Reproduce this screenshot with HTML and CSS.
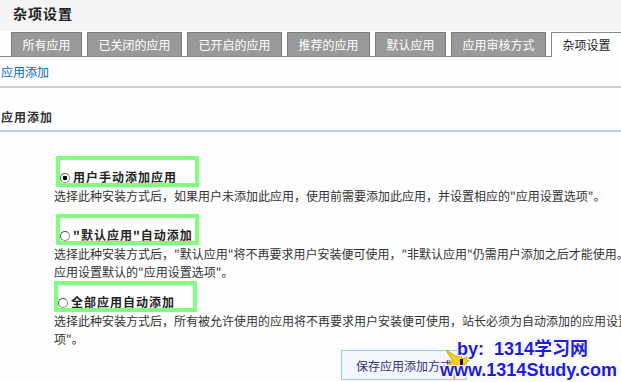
FILE: index.html
```html
<!DOCTYPE html>
<html>
<head>
<meta charset="utf-8">
<title>杂项设置</title>
<link rel="stylesheet" href="styles.css">
</head>
<body>
  <div id="page">
    <div id="head">
      <h1>杂项设置</h1>
    </div>

    <ul id="tabs">
      <li><a href="#">所有应用</a></li>
      <li><a href="#">已关闭的应用</a></li>
      <li><a href="#">已开启的应用</a></li>
      <li><a href="#">推荐的应用</a></li>
      <li><a href="#">默认应用</a></li>
      <li><a href="#">应用审核方式</a></li>
      <li class="current"><a href="#">杂项设置</a></li>
    </ul>

    <div id="crumbs"><a href="#">应用添加</a></div>

    <h2 id="section-title">应用添加</h2>

    <form id="add-form" onsubmit="return false">
      <div class="opt opt-manual">
        <label class="opt-label"><input type="radio" name="addtype" value="0" checked>用户手动添加应用</label>
        <p class="opt-desc">选择此种安装方式后，如果用户未添加此应用，使用前需要添加此应用，并设置相应的"应用设置选项"。</p>
      </div>
      <div class="opt">
        <label class="opt-label"><input type="radio" name="addtype" value="1">"默认应用"自动添加</label>
        <p class="opt-desc">选择此种安装方式后，"默认应用"将不再要求用户安装便可使用，"非默认应用"仍需用户添加之后才能使用。请为默认<br>应用设置默认的"应用设置选项"。</p>
      </div>
      <div class="opt opt-all">
        <label class="opt-label"><input type="radio" name="addtype" value="2">全部应用自动添加</label>
        <p class="opt-desc">选择此种安装方式后，所有被允许使用的应用将不再要求用户安装便可使用，站长必须为自动添加的应用设置默认的"应用设置选<br>项"。</p>
      </div>
      <div id="submit-row">
        <button id="save-btn" type="submit">保存应用添加方式</button>
      </div>
    </form>
  </div>

  <div id="watermark">
    <svg class="spark" width="34" height="34" viewBox="0 0 34 34">
      <polygon points="17,1 20,13 33,10 22,18 31,30 18,22 12,33 13,20 1,22 11,15 4,4 15,11" fill="#f7d21c" stroke="#d9a400" stroke-width="1"/>
      <rect x="18" y="13" width="3" height="14" fill="#111"/>
    </svg>
    <div class="wm-line wm-by">by:&nbsp; 1314学习网</div>
    <div class="wm-line wm-url">www.1314Study.com</div>
  </div>
</body>
</html>
```

FILE: styles.css
```css
html, body {
  overflow: hidden;
}

body {
  margin: 0;
  padding: 0;
  background-color: #fefefe;
  color: #333;
  font-family: "Noto Sans CJK SC", "Liberation Sans", sans-serif;
  font-size: 12px;
}

#page {
  width: 760px;
}

#head {
  height: 31px;
  background-color: #f4f4f4;
}

#head h1 {
  margin: 0;
  padding: 5px 0 0 13px;
  font-size: 14px;
  line-height: 16px;
  letter-spacing: 1px;
  color: #222;
}

#tabs {
  display: flex;
  gap: 5px;
  height: 24px;
  margin: 1px 0 0 0;
  padding: 0 0 0 11px;
  list-style: none;
  border-bottom: 1px solid #858585;
}

#tabs li {
  height: 23px;
  border: 1px solid #7c7c7c;
  border-bottom: none;
  background-color: #999;
}

#tabs li a {
  display: block;
  padding: 0 10.5px;
  line-height: 23px;
  color: #fff;
  text-decoration: none;
}

#tabs li.current {
  height: 24px;
  background-color: #fff;
  border-color: #8a8a8a;
}

#tabs li.current a {
  color: #222;
}

#crumbs {
  padding: 6px 0 5px 1px;
  line-height: 18px;
  border-bottom: 2px solid #cdcdcd;
}

#crumbs a {
  color: #0a66c8;
  text-decoration: none;
}

#section-title {
  margin: 0;
  padding: 20px 0 4px 1px;
  font-size: 12px;
  line-height: 18px;
  letter-spacing: 1px;
  color: #333;
  border-bottom: 2px solid #bccbf2;
}

#add-form {
  padding: 24px 0 0 54px;
}

.opt-label {
  display: block;
  width: 135px;
  margin-left: 2px;
  padding: 11px 0 0 0;
  border: 4px solid #80ff80;
  font-weight: bold;
  line-height: 12px;
  letter-spacing: 1px;
  color: #222;
  white-space: nowrap;
}

.opt-all .opt-label {
  margin-left: 0;
}

.opt-label input {
  appearance: none;
  -webkit-appearance: none;
  width: 10px;
  height: 10px;
  margin: 0 3px 0 0;
  border: 1px solid #888;
  border-top-color: #555;
  border-left-color: #555;
  border-radius: 50%;
  background: #fff;
  vertical-align: -1px;
}

.opt-label input:checked {
  background: radial-gradient(circle, #000 0 2px, #fff 2.6px);
}

.opt-desc {
  margin: 0;
  line-height: 18px;
  white-space: nowrap;
}

.opt-manual {
  margin-bottom: 9px;
}

#submit-row {
  padding: 2px 0 0 287px;
}

#save-btn {
  height: 30px;
  padding: 0 14px;
  border: 1px solid #8fd3ef;
  background-color: #f3f6fa;
  color: #33337a;
  font-family: "Noto Sans CJK SC", sans-serif;
  font-size: 12px;
  cursor: pointer;
}

#watermark {
  position: absolute;
  left: 440px;
  top: 338px;
  width: 181px;
  font-family: "Liberation Sans", "Noto Sans CJK SC", sans-serif;
  font-weight: bold;
  color: #1c1ce0;
  text-shadow: 1px 1px 0 #fff, -1px -1px 0 #fff, 1px -1px 0 #fff, -1px 1px 0 #fff, 0 0 3px #99a;
}

.spark {
  position: absolute;
  left: 2px;
  top: 8px;
}

.wm-line {
  position: relative;
  white-space: nowrap;
}

.wm-by {
  padding-left: 17px;
  font-size: 18px;
  line-height: 22px;
}

.wm-url {
  font-size: 18px;
  line-height: 20px;
}
```
